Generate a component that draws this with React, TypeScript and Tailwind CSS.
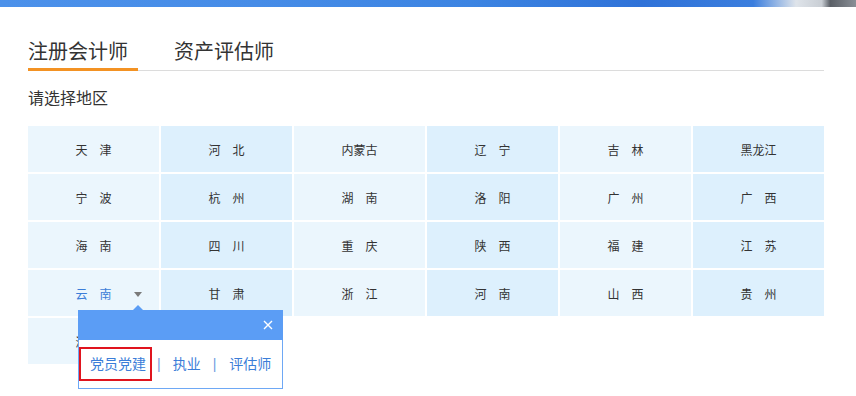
import React from "react";

const regions: string[][] = [
  ["天　津", "河　北", "内蒙古", "辽　宁", "吉　林", "黑龙江"],
  ["宁　波", "杭　州", "湖　南", "洛　阳", "广　州", "广　西"],
  ["海　南", "四　川", "重　庆", "陕　西", "福　建", "江　苏"],
  ["云　南", "甘　肃", "浙　江", "河　南", "山　西", "贵　州"],
  ["深　圳"],
];

function Popup() {
  return (
    <div className="absolute left-[50px] top-[40px] z-10 w-[205px]">
      {/* notch */}
      <div className="absolute left-[55px] top-[-5px] w-0 h-0 border-l-[5px] border-r-[5px] border-b-[5px] border-l-transparent border-r-transparent border-b-[#5b9df5]" />
      <div className="h-[30px] bg-[#5b9df5] flex items-center justify-end pr-[10px]">
        <svg width="10" height="10" viewBox="0 0 10 10">
          <path d="M1 1L9 9M9 1L1 9" stroke="#fff" strokeWidth="1.4" />
        </svg>
      </div>
      <div className="h-[49px] bg-white border border-t-0 border-[#6ea8f5] pt-[7px] flex items-start text-[14px] text-[#3b7dd8]">
        <span className="h-[34px] border-2 border-[#e0141e] pl-[9px] pr-[4px] flex items-center">党员党建</span>
        <span className="h-[34px] flex items-center ml-[5px] text-[#6f9be0]">|</span>
        <span className="h-[34px] flex items-center ml-[12px]">执业</span>
        <span className="h-[34px] flex items-center ml-[12px] text-[#6f9be0]">|</span>
        <span className="h-[34px] flex items-center ml-[13px]">评估师</span>
      </div>
    </div>
  );
}

export default function App() {
  return (
    <div
      className="w-[856px] h-[396px] bg-white overflow-hidden text-[#333]"
      style={{ fontFamily: '"Liberation Sans", "Noto Sans CJK SC", sans-serif' }}
    >
      {/* banner strip */}
      <div className="h-[7px] bg-[linear-gradient(90deg,#4c91ea_0%,#468ce7_30%,#3c84e2_55%,#2f72d8_75%,#3b7ede_88%,#dfe4ea_93%,#c9ced4_96%,#5a5f66_97%,#8a8f96_100%)]" />

      <div className="pl-[28px] w-[824px]">
        {/* tabs */}
        <div className="mt-[31px] flex border-b border-[#dcdcdc]">
          <div className="pr-[10px] pb-[2px] text-[20px] leading-[28px] text-[#333] border-b-[3px] border-[#f39223] -mb-px">
            注册会计师
          </div>
          <div className="ml-[36px] pb-[2px] text-[20px] leading-[28px] text-[#333]">资产评估师</div>
        </div>

        <div className="mt-[16px] text-[16px] leading-[24px] text-[#333]">请选择地区</div>

        {/* region grid */}
        <div className="mt-[15px] grid grid-cols-6 gap-[2px] w-[796px]">
          {regions.map((row, r) =>
            row.map((name, c) => {
              const active = r === 3 && c === 0;
              return (
                <div
                  key={`${r}-${c}`}
                  className={`relative h-[46px] pt-[3px] flex items-center justify-center text-[12px] ${
                    c % 2 === 0 ? "bg-[#ebf6fd]" : "bg-[#ddf0fd]"
                  } ${active ? "text-[#3b7dd8]" : "text-[#333]"}`}
                >
                  {name}
                  {active && (
                    <>
                      <span className="absolute left-[106px] top-[22px] w-0 h-0 border-l-[4px] border-r-[4px] border-t-[5px] border-l-transparent border-r-transparent border-t-[#7a7a7a]" />
                      <Popup />
                    </>
                  )}
                </div>
              );
            })
          )}
        </div>
      </div>
    </div>
  );
}
